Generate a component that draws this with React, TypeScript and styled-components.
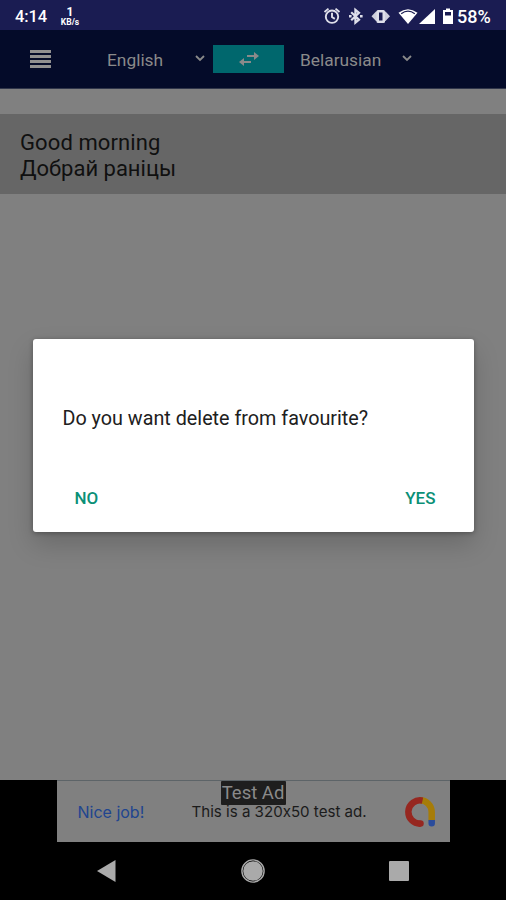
import React from "react";
import styled, { createGlobalStyle } from "styled-components";

const GlobalStyle = createGlobalStyle`
  * { box-sizing: border-box; }
  html, body { margin: 0; padding: 0; background: #000; }
  body { width: 506px; height: 900px; overflow: hidden; }
`;

const Screen = styled.div`
  position: relative;
  display: flex;
  flex-direction: column;
  width: 506px;
  height: 900px;
  background: #808080;
  font-family: Roboto, "Liberation Sans", sans-serif;
`;

const StatusBar = styled.header`
  display: flex;
  align-items: center;
  height: 30px;
  padding: 2px 14px 0 15px;
  background: #1a1c52;
  color: #fff;
  font-size: 16.5px;
  font-weight: 500;
`;

const Clock = styled.span`
  width: 33px;
  letter-spacing: -0.1px;
`;

const NetSpeed = styled.span`
  display: flex;
  flex-direction: column;
  align-items: center;
  width: 20px;
  margin-left: 12px;
  font-weight: 700;
`;

const NetValue = styled.span`
  font-size: 12px;
  line-height: 12px;
`;

const NetUnit = styled.span`
  font-size: 8.5px;
  line-height: 8px;
`;

const StatusIcons = styled.svg`
  display: block;
  width: 132px;
  height: 20px;
  margin-left: auto;
`;

const Battery = styled.span`
  width: 35px;
  margin-left: 2px;
  font-size: 18px;
  white-space: nowrap;
`;

const Toolbar = styled.nav`
  display: flex;
  align-items: center;
  height: 59px;
  padding-left: 30px;
  background: #040b29;
  border-bottom: 1px solid #30364a;
  color: #8a8a8a;
`;

const MenuButton = styled.button`
  display: flex;
  flex-direction: column;
  justify-content: space-between;
  width: 21px;
  height: 18px;
  margin-right: 56px;
  padding: 0;
  border: 0;
  background: none;
`;

const MenuLine = styled.span`
  height: 3px;
  background: #909090;
`;

const LanguagePicker = styled.div<{ $width: number }>`
  display: flex;
  align-items: center;
  justify-content: space-between;
  width: ${(p) => p.$width}px;
  padding-top: 2px;
  font-size: 17.35px;
  line-height: 24px;
`;

const Chevron = styled.svg`
  width: 10px;
  height: 8px;
  margin-top: -4px;
`;

const SwapButton = styled.button`
  display: flex;
  align-items: center;
  justify-content: center;
  width: 71px;
  height: 28px;
  margin: 0 16px 0 8px;
  padding: 0;
  border: 0;
  background: #00676d;
`;

const Favourites = styled.main`
  flex: 1;
  padding-top: 25px;
`;

const FavouriteRow = styled.article`
  height: 80px;
  padding: 16px 20px;
  background: #666;
  color: #101010;
  font-size: 22px;
  line-height: 26px;
`;

const Phrase = styled.div<{ $spacing: number }>`
  letter-spacing: ${(p) => p.$spacing}px;
`;

const AdSlot = styled.aside`
  display: flex;
  justify-content: center;
  height: 62px;
  background: #000;
`;

const AdBanner = styled.div`
  position: relative;
  display: flex;
  align-items: center;
  width: 393px;
  height: 62px;
  padding: 0 15px 0 21px;
  background: #808080;
  border-top: 1px solid #5d6468;
  font-family: Inter, Roboto, sans-serif;
  font-size: 15.1px;
  font-feature-settings: "calt" 0;
`;

const AdTitle = styled.span`
  width: 114px;
  color: #21458f;
  font-size: 16px;
  white-space: nowrap;
`;

const AdText = styled.span`
  flex: 1;
  color: #1b1b1b;
  white-space: nowrap;
`;

const AdTag = styled.span`
  position: absolute;
  top: 0;
  left: 164px;
  width: 65px;
  height: 24px;
  border-radius: 1px;
  background: #1e1e1e;
  color: #8a8a8a;
  font-family: Roboto, sans-serif;
  font-size: 18.5px;
  line-height: 24px;
  text-align: center;
  white-space: nowrap;
`;

const NavigationBar = styled.footer`
  display: flex;
  align-items: center;
  justify-content: space-between;
  height: 58px;
  padding: 0 97px 0 97px;
  background: #000;
`;

const Overlay = styled.div`
  position: absolute;
  inset: 0;
  display: flex;
  align-items: flex-start;
  justify-content: center;
  padding-top: 339px;
  pointer-events: none;
`;

const Dialog = styled.section`
  display: flex;
  flex-direction: column;
  width: 441px;
  height: 193px;
  padding: 67px 30px 18px;
  background: #fff;
  border-radius: 3px;
  box-shadow: 0 12px 26px rgba(0, 0, 0, 0.18), 0 1px 5px rgba(0, 0, 0, 0.3);
  pointer-events: auto;
`;

const Message = styled.p`
  margin: 0;
  color: #202020;
  font-size: 19.75px;
  line-height: 26px;
  white-space: nowrap;
`;

const Actions = styled.div`
  display: flex;
  justify-content: space-between;
  margin-top: auto;
  padding: 0 8px 0 12px;
`;

const ActionButton = styled.button`
  padding: 1px 0 0;
  border: 0;
  background: none;
  color: #0b9077;
  font-family: inherit;
  font-size: 17px;
  font-weight: 500;
  line-height: 31px;
`;

const Arrow = () => (
  <Chevron viewBox="0 0 10 8" fill="none" stroke="#8a8a8a" strokeWidth="1.8">
    <path d="M1 2l4 4 4-4" />
  </Chevron>
);

export default function App() {
  return (
    <Screen>
      <GlobalStyle />
      <StatusBar>
        <Clock>4:14</Clock>
        <NetSpeed>
          <NetValue>1</NetValue>
          <NetUnit>KB/s</NetUnit>
        </NetSpeed>
        <StatusIcons viewBox="323 5 132 20">
          <g fill="none" stroke="#dfdfea" strokeWidth="1.9">
            <circle cx="332" cy="15.7" r="6.2" />
            <path d="M332 11.8v4.3l2.8 1.8M324.5 11l4-3.4M339.5 11l-4-3.4" />
            <path d="M351.2 11.2l7.8 7.4-3.6 3V8.8l3.6 3-7.8 7.4" strokeWidth="2.2" />
          </g>
          <path d="M349 14h2.600v2.600h-2.600zM360 14h2.600v2.600h-2.600z" fill="#dfdfea" />
          <path d="M371.5 15.300l4.500-4.800h9.500l4.500 4.800-4.500 4.800h-9.500z" fill="#cfcfdd" />
          <rect x="376.500" y="9" width="8.500" height="13" rx="1.500" fill="#dfdfea" />
          <rect x="379" y="11.500" width="3.500" height="8" fill="#1a1c52" />
          <path d="M398.500 11.800Q408 4.500 417.500 11.800L408 23z" fill="#fff" />
          <path d="M401.200 12.700Q408 7.600 414.800 12.700" fill="none" stroke="#1a1c52" strokeWidth="1.300" />
          <path d="M435 8v15h-16z" fill="#fff" />
          <path d="M446 7.500h4v1.500h3v14h-10V9h3z" fill="#fff" />
          <rect x="445" y="11" width="6" height="3.500" fill="#1a1c52" />
        </StatusIcons>
        <Battery>58%</Battery>
      </StatusBar>

      <Toolbar>
        <MenuButton aria-label="Menu">
          <MenuLine />
          <MenuLine />
          <MenuLine />
          <MenuLine />
        </MenuButton>
        <LanguagePicker $width={98}>
          English
          <Arrow />
        </LanguagePicker>
        <SwapButton aria-label="Swap languages">
          <svg width="20" height="14" viewBox="0 0 20 14" fill="#8a8a8a">
            <path d="M8 3h7V0l5 4-5 4V5H8zM12 9H5V6L0 10l5 4v-3h7z" />
          </svg>
        </SwapButton>
        <LanguagePicker $width={112}>
          Belarusian
          <Arrow />
        </LanguagePicker>
      </Toolbar>

      <Favourites>
        <FavouriteRow>
          <Phrase $spacing={0.1}>Good morning</Phrase>
          <Phrase $spacing={0}>Добрай раніцы</Phrase>
        </FavouriteRow>
      </Favourites>

      <AdSlot>
        <AdBanner>
          <AdTitle>Nice job!</AdTitle>
          <AdText>This is a 320x50 test ad.</AdText>
          <svg width="30" height="30" viewBox="0 0 30 30" fill="none" strokeWidth="6.500">
            <path d="M15 3.300A11.700 11.700 0 0 1 26.700 15V24" stroke="#a67c08" />
            <path d="M17.500 3.560A11.700 11.700 0 1 0 15.500 26.700" stroke="#962720" />
            <circle cx="15.500" cy="26.500" r="3.250" fill="#962720" />
            <path d="M23.450 23h6.500v3.250a3.250 3.250 0 0 1-6.500 0z" fill="#2a4c9c" />
          </svg>
          <AdTag>Test Ad</AdTag>
        </AdBanner>
      </AdSlot>

      <NavigationBar>
        <svg width="19" height="22" viewBox="0 0 19 22">
          <path d="M0 11L18.500 0V22z" fill="#aaa" />
        </svg>
        <svg width="24" height="24" viewBox="0 0 24 24">
          <circle cx="12" cy="12" r="11.100" fill="none" stroke="#aaa" strokeWidth="1.400" />
          <circle cx="12" cy="12" r="9.800" fill="#aaa" />
        </svg>
        <svg width="20" height="20" viewBox="0 0 20 20">
          <rect width="20" height="20" rx="1" fill="#aaa" />
        </svg>
      </NavigationBar>

      <Overlay>
        <Dialog role="dialog">
          <Message>Do you want delete from favourite?</Message>
          <Actions>
            <ActionButton>NO</ActionButton>
            <ActionButton>YES</ActionButton>
          </Actions>
        </Dialog>
      </Overlay>
    </Screen>
  );
}
